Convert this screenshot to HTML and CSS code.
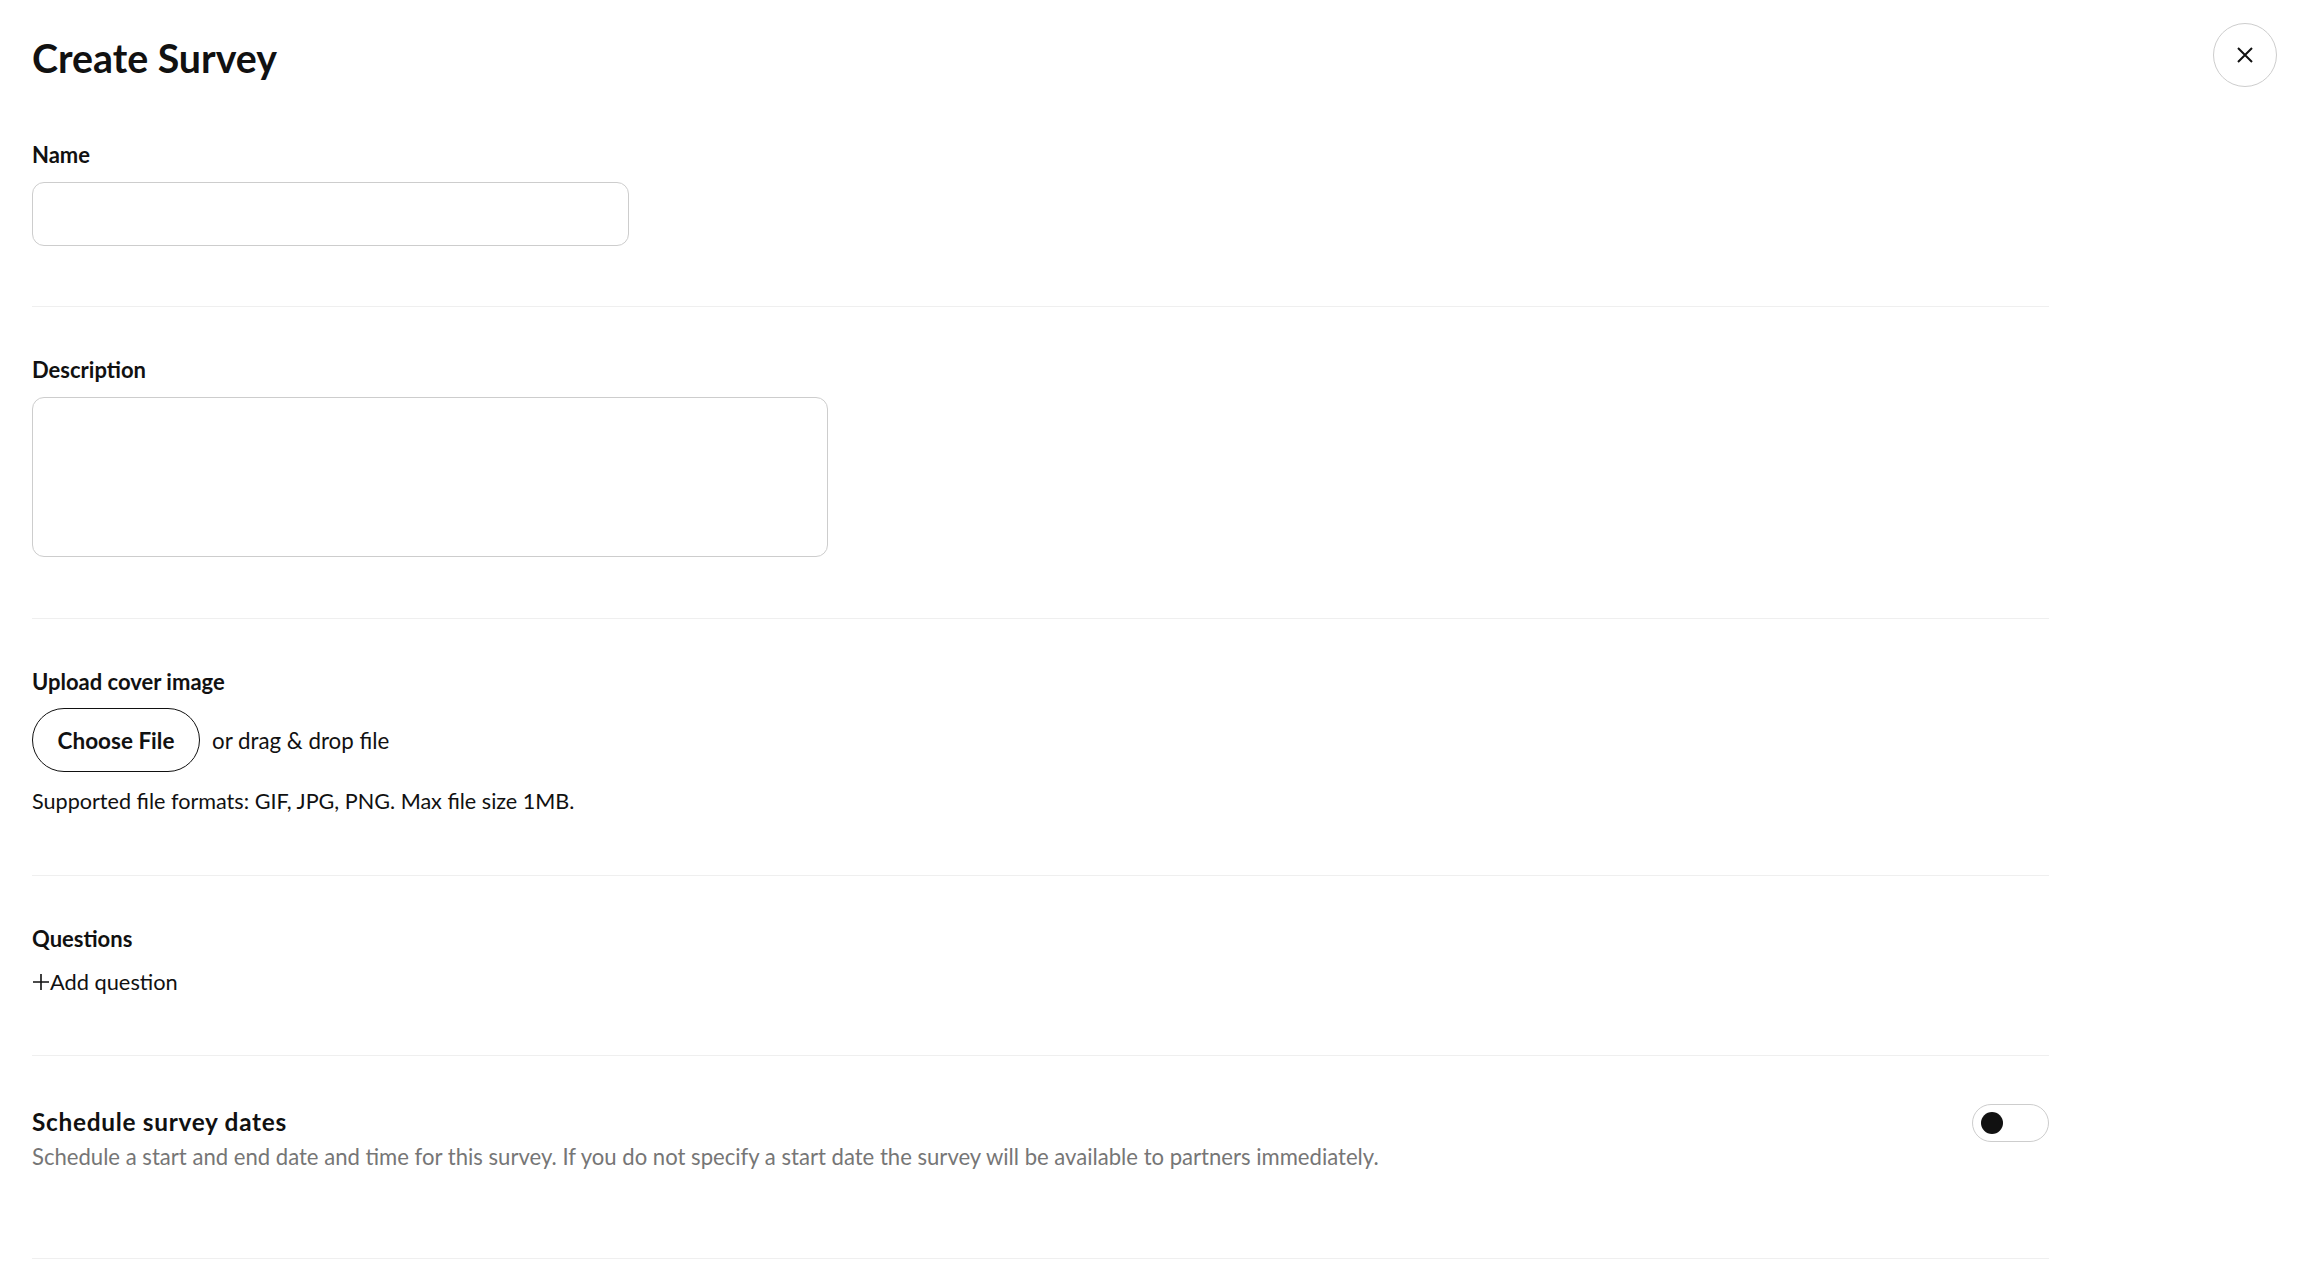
FILE: index.html
```html
<!DOCTYPE html>
<html lang="en">
<head>
<meta charset="utf-8">
<title>Create Survey</title>
<link rel="stylesheet" href="styles.css">
</head>
<body>
<div class="page">
  <header class="header">
    <h1 class="title">Create Survey</h1>
    <button class="close" aria-label="Close">
      <svg width="16" height="16" viewBox="0 0 16 16"><path d="M1 1L15 15M15 1L1 15" stroke="#111" stroke-width="2" fill="none"/></svg>
    </button>
  </header>
  <form class="form">
    <section class="section s-name">
      <label class="label">Name</label>
      <div class="input name-input"></div>
    </section>
    <section class="section s-desc">
      <label class="label">Description</label>
      <div class="input textarea"></div>
    </section>
    <section class="section s-upload">
      <label class="label">Upload cover image</label>
      <div class="upload-row">
        <span class="choose">Choose File</span>
        <span class="drag">or drag &amp; drop file</span>
      </div>
      <p class="hint">Supported file formats: GIF, JPG, PNG. Max file size 1MB.</p>
    </section>
    <section class="section s-questions">
      <label class="label">Questions</label>
      <div class="add">
        <svg width="18" height="18" viewBox="0 0 18 18"><path d="M9 1V17M1 9H17" stroke="#111" stroke-width="1.6" fill="none"/></svg>
        <span>Add question</span>
      </div>
    </section>
    <section class="section s-schedule">
      <div class="sched-text">
        <h2 class="sched-title">Schedule survey dates</h2>
        <p class="sched-desc">Schedule a start and end date and time for this survey. If you do not specify a start date the survey will be available to partners immediately.</p>
      </div>
      <div class="toggle"><span class="knob"></span></div>
    </section>
  </form>
</div>
</body>
</html>
```

FILE: styles.css
```css
* { box-sizing: border-box; }
body {
  margin: 0;
  background: #fff;
  color: #111;
  font-family: Lato, "Liberation Sans", sans-serif;
}
.page {
  padding: 23px 23px 0 32px;
}
.header {
  display: flex;
  justify-content: space-between;
  align-items: center;
  height: 64px;
}
.title {
  margin: 0;
  font-size: 39.3px;
  font-weight: 700;
  line-height: 44px;
  padding-top: 6px;
}
.close {
  width: 64px;
  height: 64px;
  border-radius: 50%;
  border: 1px solid #cdcdcd;
  background: #fff;
  display: flex;
  align-items: center;
  justify-content: center;
  padding: 0;
}
.form {
  width: 2017px;
}
.section {
  border-bottom: 1px solid #efefef;
  display: flex;
  flex-direction: column;
  align-items: flex-start;
}
.label {
  font-size: 22px;
  line-height: 26px;
  font-weight: 700;
}
.input {
  border: 1px solid #cdcdcd;
  border-radius: 12px;
  margin-top: 14px;
}
.s-name { padding: 55px 0 60px; }
.name-input { width: 597px; height: 64px; }
.s-desc { padding: 50px 0 61px; }
.textarea { width: 796px; height: 160px; }
.s-upload { padding: 50px 0 61px; }
.upload-row {
  display: flex;
  align-items: center;
  gap: 12px;
  margin-top: 13px;
}
.choose {
  width: 168px;
  height: 64px;
  border: 1px solid #111;
  border-radius: 32px;
  display: flex;
  align-items: center;
  justify-content: center;
  font-size: 22.5px;
  font-weight: 700;
}
.drag { font-size: 22.3px; }
.hint {
  margin: 16px 0 0;
  font-size: 21.6px;
  line-height: 26px;
}
.s-questions { padding: 50px 0 60px; }
.add {
  display: flex;
  align-items: center;
  margin-top: 17px;
  font-size: 21.8px;
  line-height: 26px;
}
.add svg { display: block; }
.s-schedule {
  flex-direction: row;
  justify-content: space-between;
  padding: 48px 0 88px;
}
.sched-text { padding-top: 4px; }
.sched-title {
  margin: 0;
  font-size: 24.4px;
  line-height: 28px;
  font-weight: 700;
  letter-spacing: 0.7px;
}
.sched-desc {
  margin: 8px 0 0;
  font-size: 22.1px;
  line-height: 26px;
  color: #767676;
}
.toggle {
  width: 77px;
  height: 38px;
  border: 1px solid #cdcdcd;
  border-radius: 19px;
  display: flex;
  align-items: center;
  padding-left: 8px;
}
.knob {
  width: 22px;
  height: 22px;
  border-radius: 50%;
  background: #111;
}
```
